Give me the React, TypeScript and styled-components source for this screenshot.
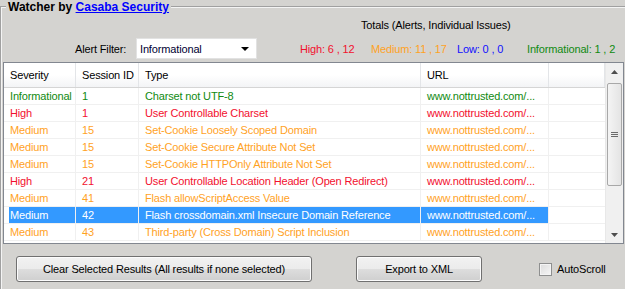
import * as React from "react";
import styled, { createGlobalStyle } from "styled-components";

type Level = "High" | "Medium" | "Low" | "Informational";

const levelColors: Record<Level, string> = {
  High: "#f2102e",
  Medium: "#ffa21f",
  Low: "#1010ff",
  Informational: "#108a10",
};

interface Alert {
  severity: Level;
  session: string;
  type: string;
  url: string;
}

const alerts: Alert[] = [
  { severity: "Informational", session: "1", type: "Charset not UTF-8", url: "www.nottrusted.com/..." },
  { severity: "High", session: "1", type: "User Controllable Charset", url: "www.nottrusted.com/..." },
  { severity: "Medium", session: "15", type: "Set-Cookie Loosely Scoped Domain", url: "www.nottrusted.com/..." },
  { severity: "Medium", session: "15", type: "Set-Cookie Secure Attribute Not Set", url: "www.nottrusted.com/..." },
  { severity: "Medium", session: "15", type: "Set-Cookie HTTPOnly Attribute Not Set", url: "www.nottrusted.com/..." },
  { severity: "High", session: "21", type: "User Controllable Location Header (Open Redirect)", url: "www.nottrusted.com/..." },
  { severity: "Medium", session: "41", type: "Flash allowScriptAccess Value", url: "www.nottrusted.com/..." },
  { severity: "Medium", session: "42", type: "Flash crossdomain.xml Insecure Domain Reference", url: "www.nottrusted.com/..." },
  { severity: "Medium", session: "43", type: "Third-party (Cross Domain) Script Inclusion", url: "www.nottrusted.com/..." },
];

// widths so each total starts where it does in the tool window
const totals: { level: Level; text: string; width: number }[] = [
  { level: "High", text: "High: 6 , 12", width: 71 },
  { level: "Medium", text: "Medium: 11 , 17", width: 86 },
  { level: "Low", text: "Low: 0 , 0", width: 70 },
  { level: "Informational", text: "Informational: 1 , 2", width: 96 },
];

const SELECTED = 7;

function App(): JSX.Element {
  return (
    <>
      <GlobalStyle />
      <GroupBox>
        <Legend>
          Watcher by <LegendLink href="#">Casaba Security</LegendLink>
        </Legend>
        <TotalsTitle>Totals (Alerts, Individual Issues)</TotalsTitle>
        <FilterRow>
          <FilterLabel>Alert Filter:</FilterLabel>
          <Combo>
            <span>Informational</span>
            <ComboArrow />
          </Combo>
          <Counts>
            {totals.map((t) => (
              <Count key={t.level} $color={levelColors[t.level]} $width={t.width}>
                {t.text}
              </Count>
            ))}
          </Counts>
        </FilterRow>
        <ListView>
          <ListBody>
            <HeaderRow>
              <HeaderCell>Severity</HeaderCell>
              <HeaderCell>Session ID</HeaderCell>
              <HeaderCell>Type</HeaderCell>
              <HeaderCell>URL</HeaderCell>
              <HeaderCell />
            </HeaderRow>
            {alerts.map((a, i) => (
              <Row key={i} $color={levelColors[a.severity]} $selected={i === SELECTED}>
                <Cell $first>{a.severity}</Cell>
                <Cell>{a.session}</Cell>
                <Cell>{a.type}</Cell>
                <Cell>{a.url}</Cell>
                <BlankCell />
              </Row>
            ))}
          </ListBody>
          <ScrollBar>
            <ScrollArrow>
              <svg width="7" height="4" viewBox="0 0 7 4">
                <path d="M0 4 L3.5 0 L7 4 Z" fill="#4d4d4d" />
              </svg>
            </ScrollArrow>
            <ScrollTrack>
              <Thumb>
                <svg width="7" height="6" viewBox="0 0 7 6">
                  <path d="M0 0.5 H7 M0 2.5 H7 M0 4.5 H7" stroke="#6b6b6b" strokeWidth="1" />
                </svg>
              </Thumb>
            </ScrollTrack>
            <ScrollArrow>
              <svg width="7" height="4" viewBox="0 0 7 4">
                <path d="M0 0 L3.5 4 L7 0 Z" fill="#4d4d4d" />
              </svg>
            </ScrollArrow>
          </ScrollBar>
        </ListView>
        <ButtonRow>
          <Button $width={296}>Clear Selected Results (All results if none selected)</Button>
          <Button $width={126} $offset={44}>
            Export to XML
          </Button>
          <CheckLabel>
            <CheckBox />
            AutoScroll
          </CheckLabel>
        </ButtonRow>
      </GroupBox>
    </>
  );
}

const GlobalStyle = createGlobalStyle`
  html, body {
    margin: 0;
    background: #d4d3d0;
    overflow: hidden;
  }
  body {
    font-family: "Liberation Sans", Arial, sans-serif;
    font-size: 11px;
    letter-spacing: -0.15px;
    color: #000;
  }
`;

const GroupBox = styled.fieldset`
  margin: 0;
  padding: 0 0 0 1px;
  height: 300px;
  border: none;
  border-top: 2px groove #f4f4f4;
  border-left: 2px groove #f4f4f4;
  min-width: 0;
`;

const Legend = styled.legend`
  margin-left: 3px;
  padding: 0 2px;
  font-size: 12px;
  font-weight: bold;
  line-height: 14px;
  letter-spacing: 0;
`;

const LegendLink = styled.a`
  color: #0000ff;
  text-decoration: underline;
`;

const TotalsTitle = styled.div`
  margin: 4px 0 0 358px;
  height: 14px;
  line-height: 14px;
`;

const FilterRow = styled.div`
  display: flex;
  align-items: center;
  height: 21px;
  margin-top: 6px;
`;

const FilterLabel = styled.span`
  margin-left: 72px;
  width: 61px;
`;

const Combo = styled.div`
  box-sizing: border-box;
  width: 121px;
  height: 21px;
  display: flex;
  align-items: center;
  justify-content: space-between;
  padding: 0 7px 0 3px;
  background: #fff;
  border: 1px solid #e2e2e2;
  color: #000033;
`;

const ComboArrow = styled.span`
  width: 0;
  height: 0;
  border-left: 4px solid transparent;
  border-right: 4px solid transparent;
  border-top: 4px solid #000;
`;

const Counts = styled.div`
  display: flex;
  margin-left: 43px;
`;

const Count = styled.span<{ $color: string; $width: number }>`
  width: ${(p) => p.$width}px;
  color: ${(p) => p.$color};
  white-space: nowrap;
`;

const ListView = styled.div`
  box-sizing: border-box;
  display: flex;
  margin: 3px 0 0 0;
  width: 621px;
  height: 182px;
  border: 1px solid #828790;
  background: #fff;
  overflow: hidden;
`;

const ListBody = styled.div`
  flex: 1;
  overflow: hidden;
`;

const columns = "72px 63px 282px 128px 1fr";

const HeaderRow = styled.div`
  display: grid;
  grid-template-columns: ${columns};
  height: 24px;
  background: linear-gradient(#ffffff 0%, #ffffff 50%, #f3f4f6 100%);
  border-bottom: 1px solid #d5d5d5;
`;

const HeaderCell = styled.div`
  display: flex;
  align-items: center;
  padding-left: 6px;
  border-right: 1px solid #e3e5e8;
  color: #000;
`;

const Row = styled.div<{ $color: string; $selected: boolean }>`
  display: grid;
  grid-template-columns: ${columns};
  height: 17px;
  color: ${(p) => (p.$selected ? "#fff" : p.$color)};
  --sel: ${(p) => (p.$selected ? "#3399ff" : "transparent")};
`;

const Cell = styled.div<{ $first?: boolean }>`
  box-sizing: border-box;
  padding-left: 6px;
  line-height: 16px;
  white-space: nowrap;
  overflow: hidden;
  border-right: 1px solid #f0f0f0;
  border-bottom: 1px solid #f0f0f0;
  background: ${(p) =>
    p.$first ? "linear-gradient(to right, transparent 5px, var(--sel) 5px)" : "var(--sel)"};
`;

const BlankCell = styled.div`
  border-bottom: 1px solid #f0f0f0;
`;

const ScrollBar = styled.div`
  width: 17px;
  display: flex;
  flex-direction: column;
  background: #f0f0f0;
  border-left: 1px solid #e8e8e8;
`;

const ScrollArrow = styled.div`
  height: 17px;
  display: flex;
  align-items: center;
  justify-content: center;
`;

const ScrollTrack = styled.div`
  flex: 1;
  padding-top: 3px;
`;

const Thumb = styled.div`
  box-sizing: border-box;
  margin: 0 1px;
  height: 103px;
  border: 1px solid #a8a8a8;
  border-radius: 2px;
  background: linear-gradient(to right, #f4f4f4, #e4e4e4);
  display: flex;
  align-items: center;
  justify-content: center;
`;

const ButtonRow = styled.div`
  display: flex;
  align-items: center;
  margin-top: 12px;
  padding-left: 13px;
`;

const Button = styled.button<{ $width: number; $offset?: number }>`
  box-sizing: border-box;
  width: ${(p) => p.$width}px;
  height: 26px;
  margin-left: ${(p) => p.$offset ?? 0}px;
  padding: 0;
  font-family: "Liberation Sans", Arial, sans-serif;
  font-size: 11px;
  letter-spacing: -0.15px;
  color: #000;
  border: 1px solid #707070;
  border-radius: 3px;
  background: linear-gradient(#f2f2f2 0%, #ebebeb 50%, #dddddd 51%, #cfcfcf 100%);
  box-shadow: inset 0 0 0 1px #fcfcfc;
`;

const CheckLabel = styled.label`
  display: flex;
  align-items: center;
  gap: 5px;
  margin-left: 57px;
`;

const CheckBox = styled.span`
  box-sizing: border-box;
  width: 13px;
  height: 13px;
  border: 1px solid #8e8f8f;
  background: linear-gradient(135deg, #dcdcdc, #f6f6f6);
  box-shadow: inset 0 0 0 1px #f4f4f4;
`;

export default App;
